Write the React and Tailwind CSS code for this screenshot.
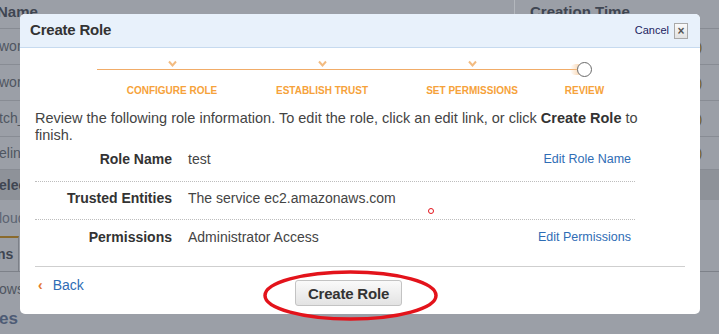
import React from 'react'

const rows = [
  { left: 'workers', h: 'h-[36px]' },
  { left: 'workers', h: 'h-[36px]' },
  { left: 'tch_logs', h: 'h-[36px]' },
  { left: 'eline', h: 'h-[33px]' },
]

const steps = ['CONFIGURE ROLE', 'ESTABLISH TRUST', 'SET PERMISSIONS']

const details = [
  { label: 'Role Name', value: 'test', link: 'Edit Role Name', cls: 'h-[38px] pt-[7px] border-b border-dotted border-[#bdbdbd]' },
  { label: 'Trusted Entities', value: 'The service ec2.amazonaws.com', cls: 'h-[38px] pt-[8px] border-b border-dotted border-[#bdbdbd]' },
  { label: 'Permissions', value: 'Administrator Access', link: 'Edit Permissions', cls: 'h-[46px] pt-[9px]' },
]

function Check() {
  return (
    <svg width="9" height="7" viewBox="0 0 9 7" className="block">
      <path d="M1 1.5 L4.5 5.5 L8 1.5" fill="none" stroke="#f3bb80" strokeWidth="2" />
    </svg>
  )
}

export default function App() {
  return (
    <div className="relative w-[719px] h-[334px] overflow-hidden bg-[#9b9fa7] font-['Liberation_Sans',Arial,sans-serif]">
      {/* dimmed page behind the dialog */}
      <div className="flex flex-col text-[#4f5661]">
        <div className="flex h-[29px] border-b border-[#878b93] items-start">
          <div className="w-[517px] -ml-[3px] pt-[1px] text-[15px] font-bold text-[#3f4652]">Name</div>
          <div className="border-l border-[#b3b7bd] h-[29px] pl-[15px] pt-[1px] text-[15px] font-bold text-[#3f4652]">Creation Time</div>
        </div>
        {rows.map((r, i) => (
          <div key={i} className={`flex items-center ${r.h} border-b border-[#888c94] text-[14px]`}>
            <div className="w-[699px] -ml-[1px]">{r.left}</div>
            <div className="text-[13px] text-[#6b5c2c]">)</div>
          </div>
        ))}
        <div className="flex items-center h-[30px] bg-[#8e9299] text-[14px] font-bold text-[#3f4652]">
          <div className="-ml-[1px]">elections</div>
        </div>
        <div className="flex items-center h-[36px] text-[14px] text-[#5b6472]">
          <div className="-ml-[1px]">loud</div>
        </div>
        <div className="flex h-[36px] border-b border-[#7d8189]">
          <div className="w-[19px] border-t-2 border-[#8a6a2c] border-r border-r-[#7c8088] flex items-center text-[14px] font-bold text-[#3f4652] overflow-hidden">
            <span className="-ml-[3px]">ns</span>
          </div>
        </div>
        <div className="flex items-center h-[34px] text-[14px] text-[#4f5661]">
          <div className="-ml-[1px]">ows</div>
        </div>
        <div className="flex items-center h-[26px] text-[17px] font-bold text-[#4d5b75]">
          <div className="-ml-[1px]">es</div>
        </div>
      </div>

      {/* dialog */}
      <div className="absolute left-[20px] top-[14px] w-[680px] h-[300px] bg-white rounded-[5px] flex flex-col overflow-hidden">
        <div className="h-[34px] bg-[#e8f1fb] border-b border-[#c6daef] flex items-center justify-between pl-[10px] pr-[12px]">
          <span className="text-[15px] font-bold text-[#333] tracking-[-0.2px]">Create Role</span>
          <div className="flex items-center gap-[5px]">
            <span className="text-[11px] text-[#1c2360]">Cancel</span>
            <span className="w-[14px] h-[16px] border border-[#a9a9a9] bg-gradient-to-b from-[#fafafa] to-[#e2e2e2] flex items-center justify-center text-[12px] leading-none font-bold text-[#555]">×</span>
          </div>
        </div>

        <div className="relative ml-[77px] pt-[12px] flex">
          <div className="absolute left-0 top-[21px] w-[480px] h-px bg-[#f1ac68]" />
          {steps.map((s) => (
            <div key={s} className="w-[150px] flex flex-col items-center">
              <Check />
              <div className="mt-[18px] text-[10px] leading-[12px] font-bold text-[#f6a23a]">{s}</div>
            </div>
          ))}
          <div className="w-[75px] flex flex-col items-center">
            <div className="relative mt-[2px] w-[15px] h-[15px]">
              <div className="absolute right-[8px] top-[2px] w-[14px] h-[11px] rounded-full bg-gradient-to-l from-[#f7c48f] to-transparent" />
              <div className="absolute inset-0 rounded-full border-[1.5px] border-[#6a6a6a] bg-white" />
            </div>
            <div className="mt-[8px] text-[10px] leading-[12px] font-bold text-[#f6a23a]">REVIEW</div>
          </div>
        </div>

        <p className="mt-[13px] pl-[15px] pr-[45px] text-[14.5px] leading-[17px] text-[#444]">
          Review the following role information. To edit the role, click an edit link, or click <b className="text-[#333]">Create Role</b> to finish.
        </p>

        <div className="mx-[15px] w-[600px] flex flex-col">
          {details.map((d) => (
            <div key={d.label} className={`flex items-start text-[14px] leading-[17px] ${d.cls}`}>
              <span className="w-[137px] text-right font-bold text-[#333]">{d.label}</span>
              <span className="ml-[16px] flex-1 text-[#444]">{d.value}</span>
              {d.link && <span className="mr-[4px] text-[12.5px] text-[#2f6db5]">{d.link}</span>}
            </div>
          ))}
        </div>

        <div className="mx-[15px] border-t border-[#cfcfcf] flex items-start">
          <div className="w-[260px] pt-[10px] flex items-center text-[14px] leading-[17px]">
            <span className="ml-[3px] text-[#e57a2e] font-bold">‹</span>
            <span className="ml-[10px] text-[#2f6db5]">Back</span>
          </div>
          <button className="mt-[13px] w-[107px] h-[26px] rounded-[3px] border border-[#c3c3c3] bg-gradient-to-b from-[#fafafa] to-[#e3e3e3] text-[15px] leading-none font-bold text-[#333] tracking-[-0.2px]">
            Create Role
          </button>
        </div>
      </div>

      {/* annotations drawn over the screenshot */}
      <svg className="absolute left-[263px] top-[270px]" width="176" height="52">
        <ellipse cx="87.5" cy="25.5" rx="85.5" ry="23.5" fill="none" stroke="#e3131b" strokeWidth="3.5" />
      </svg>
      <div className="absolute left-[428px] top-[208px] w-[6px] h-[6px] rounded-full border-[1.5px] border-[#e3131b]" />
    </div>
  )
}
